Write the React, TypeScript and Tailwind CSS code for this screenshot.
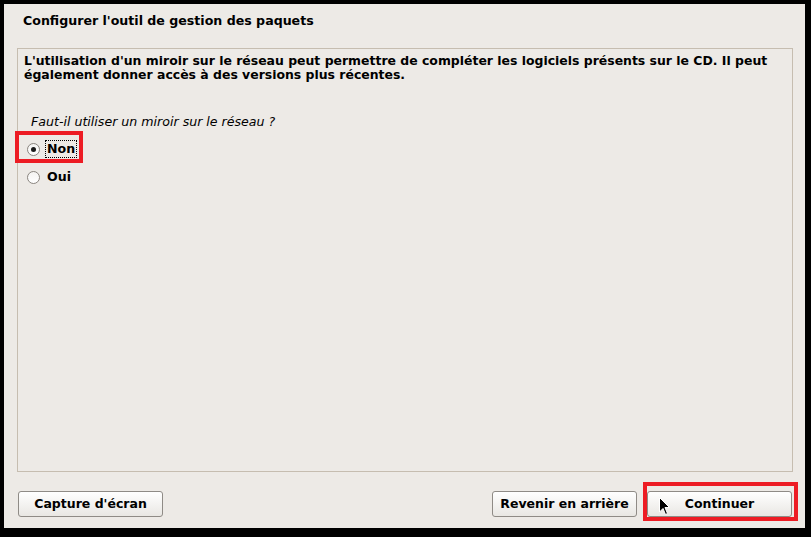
import React from "react";

const font = { fontFamily: '"DejaVu Sans", "Liberation Sans", sans-serif' };

function Radio({ checked }: { checked?: boolean }) {
  return (
    <span className="relative inline-flex h-[13px] w-[13px] items-center justify-center rounded-full border border-[#8a857f] bg-gradient-to-b from-[#f4f3f1] to-white">
      {checked && <span className="h-[5px] w-[5px] rounded-full bg-[#1a1a1a]" />}
    </span>
  );
}

function Btn({ children, className = "" }: { children: React.ReactNode; className?: string }) {
  return (
    <div
      className={`flex h-[26px] items-center justify-center rounded-[3px] border border-[#8f8b86] bg-gradient-to-b from-white to-[#e9e7e3] text-[12.5px] font-bold text-black ${className}`}
    >
      {children}
    </div>
  );
}

export default function App() {
  return (
    <div className="h-[537px] w-[811px] bg-black pl-[4px] pt-[4px]" style={font}>
      <div className="relative flex h-[524px] w-[801px] flex-col bg-[#edeae6]">
        <div className="h-[44px] whitespace-nowrap pl-[19px] pt-[9px] text-[12.6px] font-bold leading-[15px] text-black">
          Configurer l'outil de gestion des paquets
        </div>
        <div className="ml-[13px] h-[424px] w-[776px] border border-[#c6bdb0] px-[6px] pt-[5px]">
          <div className="whitespace-nowrap text-[12.45px] font-bold leading-[14px] text-black">
            L'utilisation d'un miroir sur le réseau peut permettre de compléter les logiciels présents sur le CD. Il peut
            <br />
            également donner accès à des versions plus récentes.
          </div>
          <div className="mt-[32px] whitespace-nowrap pl-[7px] text-[12.6px] italic leading-[15px] text-black">
            Faut-il utiliser un miroir sur le réseau ?
          </div>
          <div className="mt-[11px] flex flex-col gap-[12px] pl-[3px]">
            <div className="flex items-center gap-[5px]">
              <Radio checked />
              <span className="border border-dotted border-black px-[1px] py-[1px] text-[12.6px] font-bold leading-[14px] text-black">
                Non
              </span>
            </div>
            <div className="flex items-center gap-[7px]">
              <Radio />
              <span className="text-[12.6px] font-bold leading-[14px] text-black">Oui</span>
            </div>
          </div>
        </div>
        <div className="mt-[19px] flex items-center pl-[14px] pr-[13px]">
          <Btn className="w-[145px]">Capture d'écran</Btn>
          <div className="flex-1" />
          <Btn className="w-[145px]">Revenir en arrière</Btn>
          <Btn className="ml-[10px] w-[145px]">Continuer</Btn>
        </div>

        {/* annotation boxes */}
        <div className="absolute left-[11px] top-[127px] h-[32px] w-[68px] border-[4px] border-[#ed1c24]" />
        <div className="absolute left-[639px] top-[478px] h-[39px] w-[155px] border-[4px] border-[#ed1c24]" />
        {/* cursor */}
        <svg className="absolute left-[655px] top-[493px]" width="12" height="19" viewBox="0 0 12 19">
          <path d="M0.5 0.5 L0.5 15 L4 11.5 L6.5 17.5 L8.5 16.5 L6 10.5 L10.5 10.5 Z" fill="#000" stroke="#fff" strokeWidth="1" />
        </svg>
      </div>
    </div>
  );
}
